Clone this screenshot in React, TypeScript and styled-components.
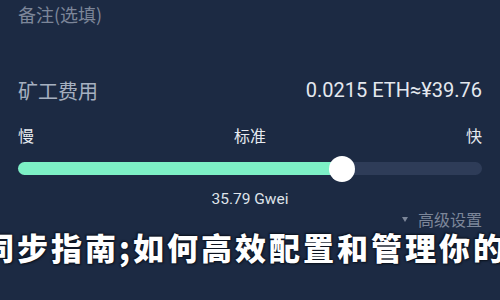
import React from "react";
import styled, { createGlobalStyle } from "styled-components";

const Global = createGlobalStyle`
  html, body { margin: 0; padding: 0; background: #1c2a43; }
  body { width: 500px; height: 300px; overflow: hidden; }
  #root { width: 500px; height: 300px; }
`;

const Page = styled.div`
  position: relative;
  width: 500px;
  height: 300px;
  overflow: hidden;
  background: #1c2a43;
  font-family: "Noto Sans CJK SC", Roboto, sans-serif;
  padding: 0 18px;
  box-sizing: border-box;
  display: flex;
  flex-direction: column;
`;

const Note = styled.div`
  margin-top: 2px;
  height: 24px;
  line-height: 24px;
  font-size: 18px;
  color: #7c8699;
`;

const FeeRow = styled.div`
  margin-top: 51px;
  display: flex;
  justify-content: space-between;
  align-items: center;
  height: 26px;
`;

const FeeLabel = styled.span`
  font-size: 20px;
  color: #a6b0c0;
`;

const FeeValue = styled.span`
  font-family: Roboto, "Noto Sans CJK SC", sans-serif;
  font-size: 20px;
  color: #e4e8ef;
`;

const SpeedRow = styled.div`
  margin-top: 22px;
  display: flex;
  justify-content: space-between;
  align-items: center;
  height: 20px;
  font-size: 16px;
  color: #e6eaf0;
`;

const Track = styled.div`
  position: relative;
  margin-top: 17px;
  height: 13px;
  border-radius: 7px;
  background: #2e3c58;
`;

const Fill = styled.div`
  height: 100%;
  border-radius: 7px;
  background: #7df0c6;
`;

const Thumb = styled.div`
  position: absolute;
  top: 50%;
  width: 26px;
  height: 26px;
  border-radius: 50%;
  background: #ffffff;
  transform: translate(-50%, -50%);
`;

const Gwei = styled.div`
  margin-top: 14px;
  text-align: center;
  font-family: Roboto, sans-serif;
  font-size: 15.5px;
  color: #dfe3ea;
  line-height: 20px;
`;

const Advanced = styled.div`
  margin-top: 0px;
  display: flex;
  justify-content: flex-end;
  align-items: center;
  gap: 10px;
  font-size: 16px;
  color: #7c8699;
  line-height: 20px;
`;

const Caret = styled.span`
  width: 0;
  height: 0;
  border-left: 3.5px solid transparent;
  border-right: 3.5px solid transparent;
  border-top: 5px solid #7c8699;
`;

const Banner = styled.div`
  position: absolute;
  left: -17px;
  top: 224px;
  white-space: nowrap;
  font-family: "Noto Sans CJK SC", sans-serif;
  font-weight: 900;
  font-size: 31px;
  letter-spacing: 3px;
  color: #ffffff;
  text-shadow: 0 0 2px #0d1420, 1px 1px 2px #0d1420, -1px -1px 2px #0d1420;
`;

export default function App() {
  const pct = (343 - 18) / 465;
  return (
    <>
      <Global />
      <Page>
        <Note>备注(选填)</Note>
        <FeeRow>
          <FeeLabel>矿工费用</FeeLabel>
          <FeeValue>0.0215 ETH≈¥39.76</FeeValue>
        </FeeRow>
        <SpeedRow>
          <span>慢</span>
          <span>标准</span>
          <span>快</span>
        </SpeedRow>
        <Track>
          <Fill style={{ width: `${pct * 100}%` }} />
          <Thumb style={{ left: `${pct * 100}%` }} />
        </Track>
        <Gwei>35.79 Gwei</Gwei>
        <Advanced>
          <Caret />
          <span>高级设置</span>
        </Advanced>
        <Banner>同步指南;如何高效配置和管理你的</Banner>
      </Page>
    </>
  );
}
